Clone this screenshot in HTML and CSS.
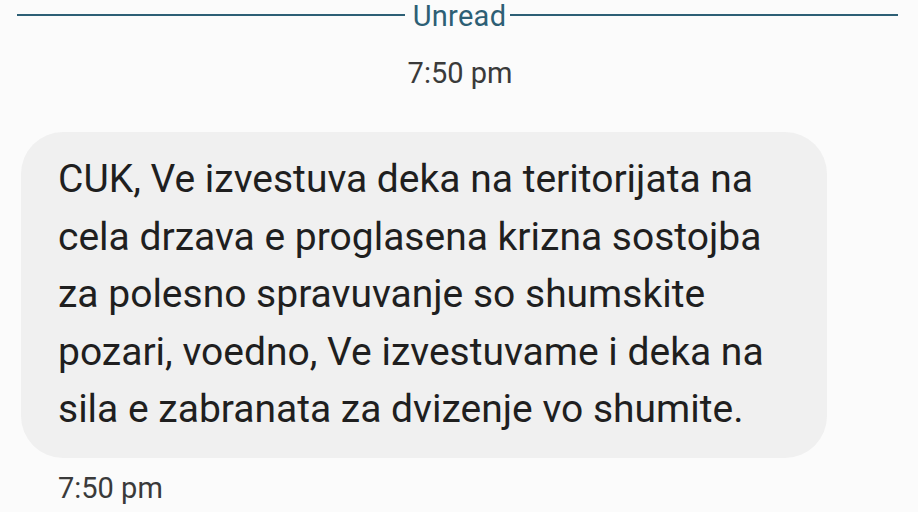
FILE: index.html
```html
<!DOCTYPE html>
<html>
<head>
<meta charset="utf-8">
<link rel="stylesheet" href="styles.css">
</head>
<body>
<div class="thread">
  <div class="divider">
    <span class="rule"></span>
    <span class="label">Unread</span>
    <span class="rule"></span>
  </div>
  <div class="stamp">7:50 pm</div>
  <div class="bubble">CUK, Ve izvestuva deka na teritorijata na<br>cela drzava e proglasena krizna sostojba<br>za polesno spravuvanje so shumskite<br>pozari, voedno, Ve izvestuvame i deka na<br>sila e zabranata za dvizenje vo shumite.</div>
  <div class="meta">7:50 pm</div>
</div>
</body>
</html>
```
FILE: styles.css
```css
html, body {
  margin: 0;
  padding: 0;
  background: #fbfbfb;
}
body {
  font-family: Roboto, "Noto Sans", sans-serif;
  width: 918px;
  height: 512px;
  overflow: hidden;
}
.thread {
  display: flex;
  flex-direction: column;
}
.divider {
  display: flex;
  align-items: flex-start;
  padding: 0 20px 0 17px;
  height: 30px;
  gap: 4px;
}
.rule {
  flex: 1;
  height: 2px;
  margin-top: 14px;
  background: #2d5f75;
}
.label {
  color: #2d5f75;
  font-size: 29px;
  line-height: 32px;
  letter-spacing: 0.3px;
  margin-left: 4px;
}
.stamp {
  text-align: center;
  color: #3a3a3a;
  font-size: 29px;
  line-height: 34px;
  margin-top: 26px;
  padding-left: 2px;
}
.bubble {
  align-self: flex-start;
  margin-left: 21px;
  margin-top: 42px;
  width: 806px;
  box-sizing: border-box;
  padding: 19px 0 19px 37px;
  background: #f0f0f0;
  border-radius: 42px;
  color: #1f1f1f;
  font-size: 39px;
  line-height: 57.5px;
}
.meta {
  margin-left: 58px;
  margin-top: 13px;
  color: #3a3a3a;
  font-size: 29px;
  line-height: 34px;
}
```
